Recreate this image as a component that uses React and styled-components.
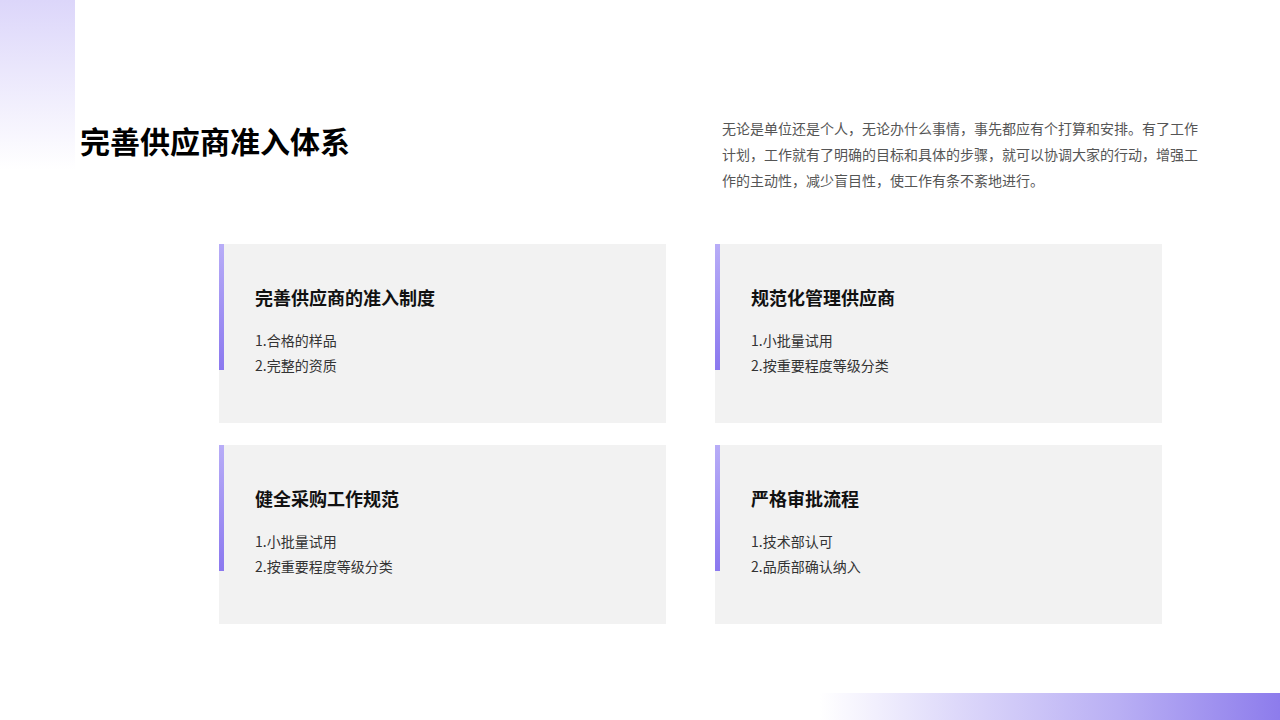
import styled, { createGlobalStyle } from 'styled-components';

const Global = createGlobalStyle`
  html, body { margin: 0; padding: 0; background: #fff; }
  body { font-family: "Noto Sans CJK SC", "Noto Sans", sans-serif; }
`;

const Page = styled.div`
  position: relative;
  width: 1280px;
  height: 720px;
  overflow: hidden;
  background: #fff;
`;

const CornerTop = styled.div`
  position: absolute;
  left: 0;
  top: 0;
  width: 75px;
  height: 170px;
  background: linear-gradient(180deg, #dcd6fa 0%, #ffffff 100%);
`;

const CornerBottom = styled.div`
  position: absolute;
  right: 0;
  bottom: 0;
  width: 460px;
  height: 27px;
  background: linear-gradient(90deg, #ffffff 0%, #ddd8fa 30%, #b9aff4 65%, #8d7cec 100%);
`;

const Header = styled.header`
  position: relative;
  display: flex;
  justify-content: space-between;
  padding: 121px 80px 0 80px;
`;

const Title = styled.h1`
  margin: 0;
  font-size: 30px;
  font-weight: 700;
  color: #000;
  line-height: 38px;
`;

const Intro = styled.p`
  margin: -6px 0 0;
  width: 478px;
  font-size: 14px;
  line-height: 26px;
  color: #555;
`;

const Grid = styled.div`
  position: relative;
  display: grid;
  grid-template-columns: 447px 447px;
  grid-auto-rows: 179px;
  column-gap: 49px;
  row-gap: 22px;
  margin: 51px 0 0 219px;
`;

const Card = styled.div`
  position: relative;
  background: #f2f2f2;
  padding: 40px 36px;
  box-sizing: border-box;
`;

const Accent = styled.div`
  position: absolute;
  left: 0;
  top: 0;
  width: 5px;
  height: 126px;
  background: linear-gradient(180deg, #b8adf7 0%, #8b78ef 100%);
`;

const CardTitle = styled.h2`
  margin: 0 0 18px;
  font-size: 18px;
  font-weight: 700;
  line-height: 26px;
  color: #111;
`;

const Item = styled.div`
  font-size: 14px;
  line-height: 25px;
  color: #333;
`;

const cards = [
  { title: '完善供应商的准入制度', items: ['1.合格的样品', '2.完整的资质'] },
  { title: '规范化管理供应商', items: ['1.小批量试用', '2.按重要程度等级分类'] },
  { title: '健全采购工作规范', items: ['1.小批量试用', '2.按重要程度等级分类'] },
  { title: '严格审批流程', items: ['1.技术部认可', '2.品质部确认纳入'] },
];

export default function App() {
  return (
    <Page>
      <Global />
      <CornerTop />
      <CornerBottom />
      <Header>
        <Title>完善供应商准入体系</Title>
        <Intro>
          无论是单位还是个人，无论办什么事情，事先都应有个打算和安排。有了工作计划，工作就有了明确的目标和具体的步骤，就可以协调大家的行动，增强工作的主动性，减少盲目性，使工作有条不紊地进行。
        </Intro>
      </Header>
      <Grid>
        {cards.map((c) => (
          <Card key={c.title}>
            <Accent />
            <CardTitle>{c.title}</CardTitle>
            {c.items.map((i) => (
              <Item key={i}>{i}</Item>
            ))}
          </Card>
        ))}
      </Grid>
    </Page>
  );
}
